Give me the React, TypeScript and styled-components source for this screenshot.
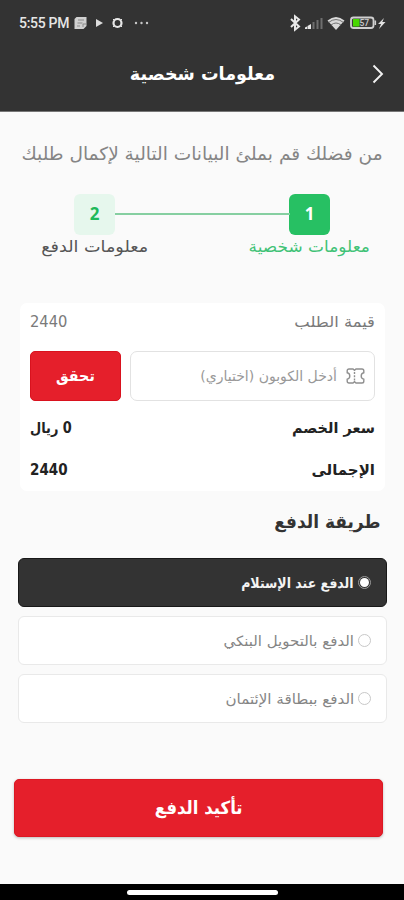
import React from "react";
import styled, { createGlobalStyle, css } from "styled-components";

const GlobalStyle = createGlobalStyle`
  *, *::before, *::after { box-sizing: border-box; }
  html, body { margin: 0; padding: 0; background: #fafafa; }
  button, input { font: inherit; margin: 0; }
`;

const Screen = styled.main`
  width: 404px;
  height: 900px;
  display: flex;
  flex-direction: column;
  background: #fafafa;
  color: #333;
  font-family: "DejaVu Sans", sans-serif;
  overflow: hidden;
`;

/* One line of text; $stretch narrows or widens the face horizontally. */
const Line = styled.span<{ $size: number; $bold?: boolean; $color?: string; $stretch?: number; $origin?: string }>`
  display: block;
  flex: none;
  white-space: nowrap;
  line-height: 24px;
  font-size: ${(p) => p.$size}px;
  font-weight: ${(p) => (p.$bold ? 700 : 400)};
  color: ${(p) => p.$color ?? "inherit"};
  ${(p) =>
    p.$stretch &&
    css`
      transform: scaleX(${p.$stretch});
      transform-origin: ${p.$origin ?? "center"};
    `}
`;

const Header = styled.header`
  flex: none;
  height: 112px;
  background: #333;
  border-bottom: 1px solid #777;
  color: #fff;
`;

const StatusBar = styled.div`
  height: 46px;
  padding: 0 17px 0 19px;
  display: flex;
  align-items: center;
  justify-content: space-between;
`;

const Clock = styled.span`
  font: 500 14px/16px Roboto, sans-serif;
  color: #e6e6e6;
  letter-spacing: -0.3px;
  width: 54px;
  white-space: nowrap;
`;

const StatusGroup = styled.div`
  display: flex;
  align-items: center;
`;

const TitleBar = styled.div`
  height: 56px;
  display: grid;
  grid-template-columns: 53px 1fr 53px;
  align-items: center;
  justify-items: center;
`;

const Body = styled.div`
  flex: 1;
  display: flex;
  flex-direction: column;
`;

const Intro = styled.div`
  height: 82px;
  padding: 30px 21px 0;
  display: flex;
  justify-content: flex-start;
`;

const Stepper = styled.div`
  height: 109px;
  padding: 0 23.5px;
  display: flex;
  justify-content: space-between;
`;

const Step = styled.div`
  width: 142px;
  display: flex;
  flex-direction: column;
  align-items: center;
`;

const StepBadge = styled.div<{ $active?: boolean }>`
  width: 41px;
  height: 41px;
  border-radius: 6px;
  display: grid;
  place-items: center;
  padding-bottom: 1px;
  font: 700 17px/20px "Noto Sans", sans-serif;
  background: ${(p) => (p.$active ? "#27c063" : "#e6f7ed")};
  color: ${(p) => (p.$active ? "#fff" : "#1fb95a")};
`;

const Connector = styled.div`
  flex: 1;
  height: 2px;
  margin: 19px -51px 0 -51px;
  background: #86cfa1;
`;

const Card = styled.section`
  margin: 0 19px 0 20px;
  height: 188px;
  padding: 7px 10px 0;
  border-radius: 7px;
  background: #fff;
`;

const Row = styled.div<{ $gap?: number }>`
  display: flex;
  justify-content: space-between;
  height: 24px;
  margin-bottom: ${(p) => p.$gap ?? 0}px;
`;

const CouponRow = styled.div`
  display: flex;
  gap: 9px;
  height: 50px;
  margin-bottom: 15px;
`;

const CouponField = styled.div`
  flex: 1;
  display: flex;
  align-items: center;
  padding: 0 9px;
  gap: 9px;
  border: 1px solid #e2e2e2;
  border-radius: 7px;
`;

const CheckButton = styled.button`
  width: 91px;
  padding: 0;
  border: 1px solid #d9121e;
  border-radius: 5px;
  background: #e51f2b;
  color: #fff;
  display: grid;
  place-items: center;
`;

const SectionTitle = styled.div`
  height: 67px;
  padding: 19px 24px 0;
  display: flex;
`;

const Options = styled.div`
  display: flex;
  flex-direction: column;
  gap: 9px;
  padding: 0 17px 0 18px;
`;

const Option = styled.div<{ $active?: boolean }>`
  height: 49px;
  display: flex;
  align-items: center;
  gap: 4px;
  padding: 0 15px;
  border-radius: 6px;
  border: 1px solid ${(p) => (p.$active ? "#181818" : "#e9e9e9")};
  background: ${(p) => (p.$active ? "#333" : "#fff")};
`;

const Radio = styled.i<{ $active?: boolean }>`
  flex: none;
  width: 13px;
  height: 13px;
  border-radius: 50%;
  border: 1px solid ${(p) => (p.$active ? "#999" : "#c8c8c8")};
  display: grid;
  place-items: center;
  &::after {
    content: "";
    width: 9px;
    height: 9px;
    border-radius: 50%;
    background: ${(p) => (p.$active ? "#fff" : "transparent")};
  }
`;

const ConfirmButton = styled.button`
  margin: 56px 21px 0 14px;
  height: 58px;
  border: 1px solid #dc1823;
  border-radius: 5px;
  background: #e51f2b;
  color: #fff;
  box-shadow: 0 1px 3px rgba(0, 0, 0, 0.25);
  display: grid;
  place-items: center;
`;

const NavBar = styled.footer`
  flex: none;
  height: 16px;
  background: #000;
  display: flex;
  justify-content: center;
  padding-top: 6px;
`;

const HomePill = styled.div`
  width: 151px;
  height: 5px;
  border-radius: 3px;
  background: #fff;
`;

const LeftIcons = () => (
  <svg width="78" height="16" viewBox="0 0 78 16">
    <path d="M3.500 2h10v9l-3 3H1.500V4z" fill="#d0d0d0" />
    <path d="M5 5h6M4.500 8h5M4 11h3M10 12v-3h3" stroke="#8a8a8a" fill="none" />
    <path d="M23 4l7 4-7 4z" fill="#dcdcdc" />
    <circle cx="44.500" cy="8" r="4" fill="none" stroke="#e8e8e8" strokeWidth="2.200" />
    <path d="M40 4l2 2M49 4l-2 2M40 12l2-2M49 12l-2-2" stroke="#e8e8e8" />
    <g fill="#c8c8c8">
      <circle cx="63" cy="8" r="1.200" />
      <circle cx="68.500" cy="8" r="1.200" />
      <circle cx="74" cy="8" r="1.200" />
    </g>
  </svg>
);

const RightIcons = () => (
  <svg width="98" height="18" viewBox="289 14 98 18">
    <path d="M291 19l8 7.500-4 3.200V16.300l4 3.200-8 7.500" fill="none" stroke="#e8e8e8" strokeWidth="2" />
    <path d="M305 29v-1.500l2-1V29zM307.500 29v-3l3.500-2V29z" fill="#e8e8e8" />
    <path d="M313.500 29v-7M317.500 29v-9M321.500 29V18" stroke="#6e6e6e" strokeWidth="2" />
    <path d="M327.500 20.500q8.500-7 17 0L336 30z" fill="#dadada" />
    <path d="M328.500 22.500q7.500-6 15 0M331 25q5-4 10 0" fill="none" stroke="#666" strokeWidth="0.900" />
    <rect x="351" y="17.500" width="22.500" height="10.500" rx="2.500" fill="#3a3a3a" stroke="#d0d0d0" strokeWidth="1.800" />
    <path d="M353 19h6.500v7.500H353z" fill="#48d600" />
    <path d="M375.300 20.500v4.500" stroke="#d0d0d0" strokeWidth="1.600" />
    <text x="359.500" y="25.800" fontFamily="Roboto" fontSize="8.500" fontWeight="500" fill="#ccc">57</text>
    <path d="M384 18l-6 6h3l-2 5 6.500-7h-3.200z" fill="#e2e2e2" />
  </svg>
);

const Chevron = () => (
  <svg width="12" height="20" viewBox="0 0 12 20">
    <path d="M1.500 1.500L10 10l-8.500 8.500" fill="none" stroke="#f2f2f2" strokeWidth="1.900" />
  </svg>
);

const Ticket = () => (
  <svg width="19" height="16" viewBox="0 0 19 16">
    <path
      d="M3 1h4l1.500 1.300L10 1h6q1.800 0 1.800 1.800v2q-2.600.6-2.600 3.200t2.600 3.200v2q0 1.800-1.800 1.800h-6l-1.500-1.300L7 15H3q-1.800 0-1.800-1.800v-2Q3.800 10.600 3.800 8T1.200 4.800v-2Q1.200 1 3 1z"
      fill="none"
      stroke="#8f8f8f"
      strokeWidth="1.400"
    />
    <path d="M8.500 4v2M8.500 7.200v2M8.500 10.500v2" stroke="#8f8f8f" strokeWidth="1.400" />
  </svg>
);

const options = [
  { label: "الدفع عند الإستلام", stretch: 0.895, active: true },
  { label: "الدفع بالتحويل البنكي", stretch: 1.07 },
  { label: "الدفع ببطاقة الإئتمان", stretch: 1.08 },
];

export default function App() {
  return (
    <Screen dir="rtl">
      <GlobalStyle />
      <Header>
        <StatusBar dir="ltr">
          <StatusGroup>
            <Clock>5:55 PM</Clock>
            <LeftIcons />
          </StatusGroup>
          <RightIcons />
        </StatusBar>
        <TitleBar>
          <Chevron />
          <Line $size={18} $bold $stretch={0.975}>معلومات شخصية</Line>
        </TitleBar>
      </Header>
      <Body>
        <Intro>
          <Line $size={18} $color="#858585" $stretch={1.03} $origin="right">من فضلك قم بملئ البيانات التالية لإكمال طلبك</Line>
        </Intro>
        <Stepper>
          <Step>
            <StepBadge $active>1</StepBadge>
            <Line $size={16} $color="#3fc276" $stretch={1.06}>معلومات شخصية</Line>
          </Step>
          <Connector />
          <Step>
            <StepBadge>2</StepBadge>
            <Line $size={16} $color="#555" $stretch={1.1}>معلومات الدفع</Line>
          </Step>
        </Stepper>
        <Card>
          <Row $gap={17}>
            <Line $size={15} $color="#7a7a7a" $stretch={1.09} $origin="right">قيمة الطلب</Line>
            <Line $size={15} $color="#7a7a7a" $stretch={0.98} $origin="left">2440</Line>
          </Row>
          <CouponRow>
            <CouponField>
              <Ticket />
              <Line $size={14} $color="#999">أدخل الكوبون (اختياري)</Line>
            </CouponField>
            <CheckButton>
              <Line $size={15} $bold $stretch={0.95}>تحقق</Line>
            </CheckButton>
          </CouponRow>
          <Row $gap={18}>
            <Line $size={15} $bold $color="#222" $stretch={0.965} $origin="right">سعر الخصم</Line>
            <Line $size={15} $bold $color="#222" $stretch={0.86} $origin="left">0 ريال</Line>
          </Row>
          <Row>
            <Line $size={15} $bold $color="#222">الإجمالى</Line>
            <Line $size={15} $bold $color="#222" $stretch={0.9} $origin="left">2440</Line>
          </Row>
        </Card>
        <SectionTitle>
          <Line $size={18} $bold $stretch={0.945} $origin="right">طريقة الدفع</Line>
        </SectionTitle>
        <Options>
          {options.map((o) => (
            <Option key={o.label} $active={o.active}>
              <Radio $active={o.active} />
              <Line $size={14} $bold={o.active} $color={o.active ? "#f4f4f4" : "#858585"} $stretch={o.stretch} $origin="right">
                {o.label}
              </Line>
            </Option>
          ))}
        </Options>
        <ConfirmButton>
          <Line $size={18} $bold $stretch={0.92}>تأكيد الدفع</Line>
        </ConfirmButton>
      </Body>
      <NavBar>
        <HomePill />
      </NavBar>
    </Screen>
  );
}
